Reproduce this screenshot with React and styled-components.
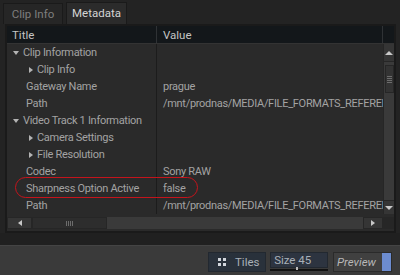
import React from "react";
import styled, { createGlobalStyle } from "styled-components";

const GlobalStyle = createGlobalStyle`
  html, body { margin: 0; padding: 0; background: #232323; }
  body {
    width: 400px; height: 275px; overflow: hidden;
    font-family: "Roboto", "Liberation Sans", sans-serif;
    font-size: 11px;
  }
`;

const Screen = styled.div`
  width: 400px;
  height: 275px;
  display: flex;
  flex-direction: column;
  background: #232323;
`;

const TabBar = styled.div`
  height: 24px;
  display: flex;
  align-items: flex-end;
  gap: 3px;
  padding-left: 3px;
`;

const Tab = styled.div`
  width: ${(p) => (p.$active ? 61 : 60)}px;
  height: ${(p) => (p.$active ? 22 : 21)}px;
  box-sizing: border-box;
  display: flex;
  align-items: center;
  justify-content: center;
  padding-bottom: 1px;
  background: ${(p) => (p.$active ? "#2b2b2b" : "#262626")};
  border: 1px solid #1a1a1a;
  border-bottom: none;
  color: ${(p) => (p.$active ? "#d4d4d4" : "#7e7e7e")};
  font-size: 11.5px;
`;

const Frame = styled.div`
  position: relative;
  margin: 0 4px 0 5px;
  height: 209px;
  box-sizing: border-box;
  border: 2px solid #1a1a1a;
  background: #2a2a2a;
  display: flex;
  flex-direction: column;
`;

const Header = styled.div`
  height: 18px;
  display: flex;
  background: #13171a;
  color: #c4c4c4;
  border-bottom: 1px solid #333;
  box-sizing: border-box;
  font-size: 11.5px;
`;

const HeaderCell = styled.div`
  width: ${(p) => p.$w}px;
  flex: ${(p) => (p.$grow ? 1 : "none")};
  display: flex;
  align-items: center;
  padding-left: ${(p) => p.$pad}px;
  box-sizing: border-box;
  border-right: ${(p) => (p.$line ? "1px solid #2f3235" : "none")};
`;

const Body = styled.div`
  height: 173px;
  display: flex;
`;

const Rows = styled.div`
  flex: 1;
  overflow: hidden;
`;

const Row = styled.div`
  height: 17px;
  display: flex;
  color: #a3a3a3;
  font-size: 11px;
  letter-spacing: -0.3px;
`;

const TitleCell = styled.div`
  width: 150px;
  flex: none;
  display: flex;
  align-items: center;
  padding-left: ${(p) => p.$indent}px;
  box-sizing: border-box;
  border-right: 1px solid #1c1c1c;
  white-space: nowrap;
`;

const ValueCell = styled.div`
  flex: 1;
  min-width: 0;
  padding-left: 6px;
  display: flex;
  align-items: center;
  white-space: nowrap;
  overflow: hidden;
`;

const Arrow = styled.span`
  width: 0;
  height: 0;
  margin-right: 4px;
  border-style: solid;
  ${(p) =>
    p.$open
      ? "border-width: 4px 3px 0 3px; border-color: #b4b4b4 transparent transparent transparent;"
      : "border-width: 3px 0 3px 4px; border-color: transparent transparent transparent #b4b4b4; margin-left: 1px; margin-right: 4px;"}
`;

const VScroll = styled.div`
  width: 11px;
  height: 170px;
  background: #3a3a3a;
  border-left: 1px solid #262626;
  display: flex;
  flex-direction: column;
  align-items: center;
  box-sizing: border-box;
`;

const ScrollBtn = styled.div`
  height: ${(p) => p.$h}px;
  width: 100%;
  display: flex;
  align-items: center;
  justify-content: center;
  background: #353535;
  border-bottom: ${(p) => (p.$top ? "1px solid #262626" : "none")};
  border-top: ${(p) => (p.$top ? "none" : "1px solid #262626")};
  box-sizing: border-box;
`;

const Tri = styled.span`
  width: 0;
  height: 0;
  border-style: solid;
  ${(p) =>
    ({
      up: "border-width: 0 4px 4px 4px; border-color: transparent transparent #c8c8c8 transparent;",
      down: "border-width: 4px 4px 0 4px; border-color: #c8c8c8 transparent transparent transparent;",
      left: "border-width: 3px 4px 3px 0; border-color: transparent #c8c8c8 transparent transparent;",
      right: "border-width: 3px 0 3px 4px; border-color: transparent transparent transparent #c8c8c8;",
    })[p.$dir]}
`;

const VThumb = styled.div`
  margin-top: 3px;
  width: 9px;
  height: 28px;
  box-sizing: border-box;
  background: #333;
  border: 1px solid #262626;
  display: flex;
  flex-direction: column;
  align-items: center;
  justify-content: center;
  gap: 1px;
`;

const GripH = styled.span`
  width: 5px;
  height: 1px;
  background: #6c6c6c;
`;

const VTrack = styled.div`
  flex: 1;
`;

const HScrollRow = styled.div`
  height: 12px;
  display: flex;
`;

const HScroll = styled.div`
  flex: 1;
  display: flex;
  background: #3a3a3a;
`;

const HBtn = styled.div`
  width: ${(p) => p.$w}px;
  display: flex;
  align-items: center;
  justify-content: center;
  background: #353535;
  border: 1px solid #262626;
  box-sizing: border-box;
`;

const HThumb = styled.div`
  width: 75px;
  background: #2d2d2d;
  border: 1px solid #262626;
  box-sizing: border-box;
  display: flex;
  align-items: center;
  justify-content: center;
  gap: 1px;
`;

const GripV = styled.span`
  width: 1px;
  height: 5px;
  background: #6c6c6c;
`;

const HTrack = styled.div`
  flex: 1;
`;

const Corner = styled.div`
  width: 11px;
  background: #262626;
`;

const Highlight = styled.div`
  position: absolute;
  left: 8px;
  top: 151px;
  width: 183px;
  height: 21px;
  box-sizing: border-box;
  border: 1.5px solid #c4141c;
  border-radius: 11px;
  pointer-events: none;
`;

const Gap = styled.div`
  height: 12px;
  background: #202020;
`;

const BottomBar = styled.div`
  flex: 1;
  background: #3a3a3a;
  border-top: 1px solid #444;
  display: flex;
  align-items: flex-start;
  padding: 6px 8px 0 208px;
  gap: 4px;
  font-size: 11.5px;
`;

const TilesBtn = styled.div`
  width: 59px;
  height: 20px;
  box-sizing: border-box;
  background: #29313b;
  border: 1px solid #222830;
  display: flex;
  align-items: center;
  padding-left: 9px;
  gap: 9px;
  color: #a9b0b8;
`;

const Dots = styled.span`
  display: grid;
  grid-template-columns: 3px 3px;
  gap: 2px;
  & > i {
    width: 3px;
    height: 3px;
    background: #d2d6dc;
  }
`;

const SizeBox = styled.div`
  width: 59px;
  height: 20px;
  display: flex;
  flex-direction: column;
`;

const SizeField = styled.div`
  height: 16px;
  background: #2d3440;
  border: 1px solid #222830;
  box-sizing: border-box;
  display: flex;
  align-items: center;
  padding-left: 3px;
  color: #a9b0b8;
`;

const Slider = styled.div`
  position: relative;
  margin-top: 1px;
  height: 2px;
  background: #111;
  & > span {
    position: absolute;
    left: 26px;
    top: -2px;
    width: 2px;
    height: 3px;
    background: #bbb;
  }
`;

const PreviewBox = styled.div`
  width: 60px;
  height: 20px;
  box-sizing: border-box;
  background: #404040;
  border: 1px solid #2a2a2a;
  display: flex;
  margin-left: 1px;
`;

const PreviewText = styled.div`
  flex: 1;
  display: flex;
  align-items: center;
  padding-left: 3px;
  font-style: italic;
  color: #b8b8b8;
`;

const Blue = styled.div`
  width: 9px;
  background: #6c8cd0;
`;

const rows = [
  { title: "Clip Information", indent: 6, arrow: "open" },
  { title: "Clip Info", indent: 21, arrow: "closed" },
  { title: "Gateway Name", indent: 19, value: "prague" },
  { title: "Path", indent: 19, value: "/mnt/prodnas/MEDIA/FILE_FORMATS_REFERENCE/MXF_XDCAM" },
  { title: "Video Track 1 Information", indent: 6, arrow: "open" },
  { title: "Camera Settings", indent: 21, arrow: "closed" },
  { title: "File Resolution", indent: 21, arrow: "closed" },
  { title: "Codec", indent: 19, value: "Sony RAW" },
  { title: "Sharpness Option Active", indent: 19, value: "false" },
  { title: "Path", indent: 19, value: "/mnt/prodnas/MEDIA/FILE_FORMATS_REFERENCE/MXF_XDCAM" },
];

export default function App() {
  return (
    <>
      <GlobalStyle />
      <Screen>
        <TabBar>
          <Tab>Clip Info</Tab>
          <Tab $active>Metadata</Tab>
        </TabBar>
        <Frame>
          <Header>
            <HeaderCell $w={150} $pad={5} $line>Title</HeaderCell>
            <HeaderCell $grow $pad={6} $line>Value</HeaderCell>
            <HeaderCell $w={11} />
          </Header>
          <Body>
            <Rows>
              {rows.map((r, i) => (
                <Row key={i}>
                  <TitleCell $indent={r.indent}>
                    {r.arrow && <Arrow $open={r.arrow === "open"} />}
                    {r.title}
                  </TitleCell>
                  <ValueCell>{r.value}</ValueCell>
                </Row>
              ))}
            </Rows>
            <VScroll>
              <ScrollBtn $h={18} $top>
                <Tri $dir="up" />
              </ScrollBtn>
              <VThumb>
                <GripH />
                <GripH />
                <GripH />
                <GripH />
              </VThumb>
              <VTrack />
              <ScrollBtn $h={14}>
                <Tri $dir="down" />
              </ScrollBtn>
            </VScroll>
          </Body>
          <HScrollRow>
            <HScroll>
              <HBtn $w={25}>
                <Tri $dir="left" />
              </HBtn>
              <HThumb>
                <GripV />
                <GripV />
                <GripV />
                <GripV />
              </HThumb>
              <HTrack />
              <HBtn $w={20}>
                <Tri $dir="right" />
              </HBtn>
            </HScroll>
            <Corner />
          </HScrollRow>
          <Highlight />
        </Frame>
        <Gap />
        <BottomBar>
          <TilesBtn>
            <Dots>
              <i />
              <i />
              <i />
              <i />
            </Dots>
            Tiles
          </TilesBtn>
          <SizeBox>
            <SizeField>Size 45</SizeField>
            <Slider>
              <span />
            </Slider>
          </SizeBox>
          <PreviewBox>
            <PreviewText>Preview</PreviewText>
            <Blue />
          </PreviewBox>
        </BottomBar>
      </Screen>
    </>
  );
}
